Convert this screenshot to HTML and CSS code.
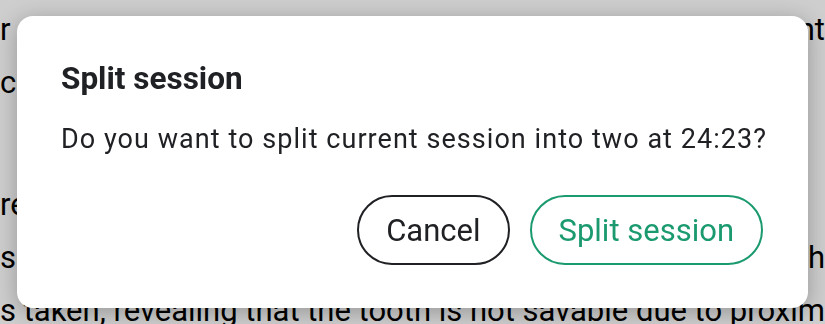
FILE: index.html
```html
<!DOCTYPE html>
<html lang="en">
<head>
<meta charset="utf-8">
<title>Split session</title>
<link rel="stylesheet" href="styles.css">
</head>
<body>
<main class="notes">
  <p class="para">
    <span class="line"><span class="lead">r need for further treatment was discussed with the patie</span><span class="tail">nt</span></span>
    <span class="line"><span class="lead">ce the procedure was explained in detail</span></span>
  </p>
  <p class="para para-second">
    <span class="line"><span class="lead">re-evaluation of the affected area was performed</span></span>
    <span class="line"><span class="lead">se of persistent pain, an additional radiograph of the tooth wi</span><span class="tail">th</span></span>
    <span class="line"><span class="lead">s taken, revealing that the tooth is not savable due to proximity to the sinus</span></span>
  </p>
</main>

<div class="overlay">
  <section class="dialog" role="dialog" aria-labelledby="dlg-title">
    <h2 class="dialog-title" id="dlg-title">Split session</h2>
    <p class="dialog-text">Do you want to split current session into two at 24:23?</p>
    <div class="dialog-actions">
      <button class="btn btn-cancel" type="button">Cancel</button>
      <button class="btn btn-primary" type="button">Split session</button>
    </div>
  </section>
</div>
</body>
</html>
```

FILE: styles.css
```css
html, body {
  margin: 0;
  padding: 0;
}

body {
  width: 825px;
  height: 324px;
  overflow: hidden;
  background: #cecece;
  font-family: Roboto, "Liberation Sans", sans-serif;
}

.notes {
  padding-top: 3px;
  color: #000;
  font-size: 31px;
  line-height: 53px;
}

.para {
  margin: 0;
}

.para-second {
  margin-top: 69px;
}

.line {
  display: flex;
  justify-content: space-between;
  white-space: nowrap;
  overflow: hidden;
}

.lead {
  flex: 1 1 auto;
  min-width: 0;
  overflow: hidden;
}

.tail {
  flex: 0 0 auto;
}

.overlay {
  position: fixed;
  inset: 0;
  display: flex;
  align-items: center;
  justify-content: center;
}

.dialog {
  box-sizing: border-box;
  width: 791px;
  padding: 44px 45px 43px 44px;
  background: #fff;
  border-radius: 16px;
  box-shadow: 0 4px 22px rgba(0, 0, 0, 0.28);
  color: #202124;
}

.dialog-title {
  margin: 0;
  font-size: 31.5px;
  line-height: 38px;
  font-weight: 700;
}

.dialog-text {
  margin: 23px 0 0;
  font-size: 27px;
  letter-spacing: 1.05px;
  line-height: 36px;
  white-space: nowrap;
}

.dialog-actions {
  display: flex;
  justify-content: flex-end;
  gap: 20px;
  margin-top: 38px;
}

.btn {
  box-sizing: border-box;
  height: 70px;
  padding: 0 27px;
  border-radius: 35px;
  border: 2px solid #202124;
  background: #fff;
  color: #202124;
  font-family: Roboto, "Liberation Sans", sans-serif;
  font-size: 31px;
  line-height: 1;
}

.btn-primary {
  border-color: #1a9a6e;
  color: #1a9a6e;
}
```
